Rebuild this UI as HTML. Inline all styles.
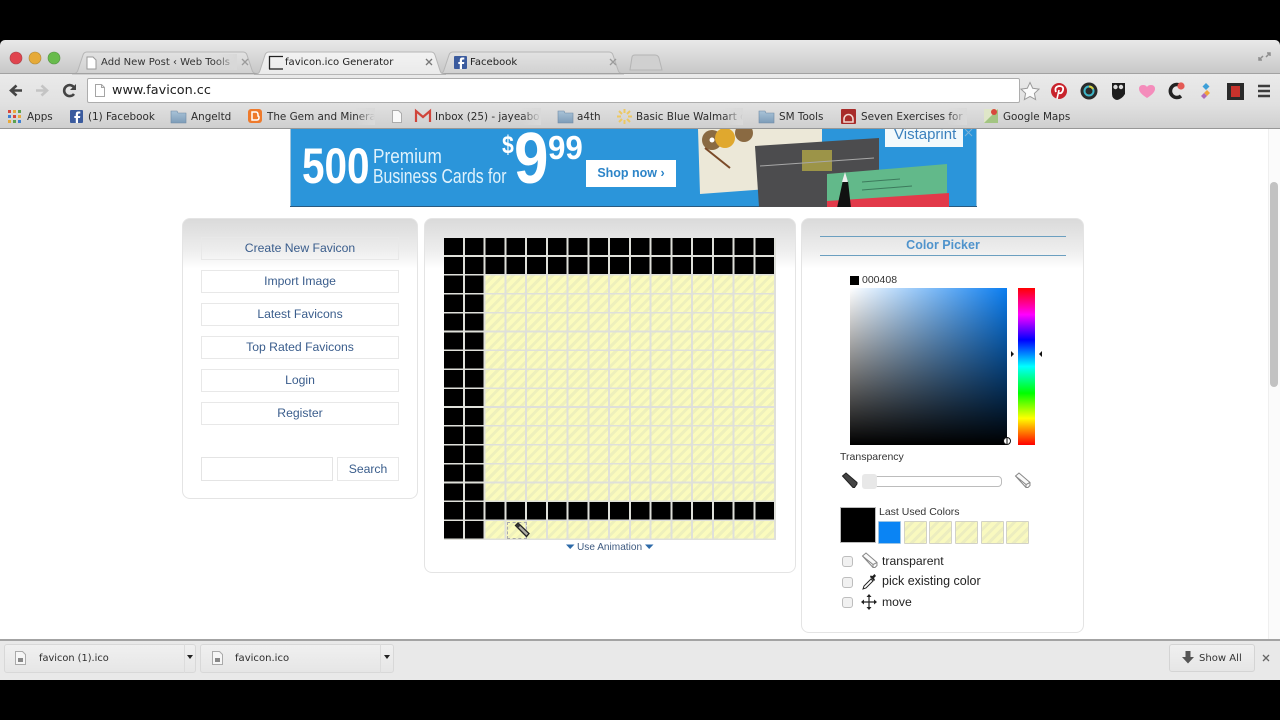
<!DOCTYPE html>
<html><head><meta charset="utf-8"><title>favicon.ico Generator</title>
<style>
html,body{margin:0;padding:0;background:#000;}
#page{position:relative;width:1280px;height:720px;overflow:hidden;background:#000;font-family:"Liberation Sans",sans-serif;filter:blur(.35px);}
.a,.t{position:absolute;}
.t{white-space:nowrap;}
.ch{font-family:"DejaVu Sans",sans-serif;font-size:10.4px;color:#2c2c2c;line-height:14px;}
.tb{font-size:10.05px;}
.panel{position:absolute;box-sizing:border-box;border:1px solid #e4e4e4;border-radius:8px;background:linear-gradient(#dadada 0,#eeeeee 32px,#fff 50px,#fff 100%);}
.btn{position:absolute;box-sizing:border-box;left:201px;width:198px;height:23px;border:1px solid #e8e8e8;text-align:center;font-size:12.2px;line-height:21px;color:#3a5d8c;}
.sw{position:absolute;top:521px;width:23px;height:23px;box-sizing:border-box;border:1px solid #d2d2c6;border-radius:1px;background:repeating-linear-gradient(135deg,#f9f9bf 0 4px,#ecedbf 4px 7px);}
.cb{position:absolute;left:842px;width:11px;height:11px;box-sizing:border-box;border:1px solid #bdbdbd;border-radius:3px;background:#f1f1f1;}
.lbl{font-size:12.2px;color:#222;line-height:16px;}
</style></head><body>
<div id="page">
<!-- chrome -->
<div class="a" style="left:0;top:40px;width:1280px;height:34px;background:linear-gradient(#e8e8e8,#c6c6c6);border-radius:5px 5px 0 0;"></div>
<div class="a" style="left:0;top:74px;width:1280px;height:32px;background:linear-gradient(#eaeaea,#e0e0e0);"></div>
<div class="a" style="left:0;top:105px;width:1280px;height:23px;background:linear-gradient(#e0e0e0,#cfcfcf);"></div>
<div class="a" style="left:0;top:128px;width:1280px;height:1px;background:#979797;"></div>
<svg class="a" style="left:0;top:40px" width="1280" height="40" viewBox="0 40 1280 40">
<defs>
<linearGradient id="tb" x1="0" y1="0" x2="0" y2="1"><stop offset="0" stop-color="#e2e2e2"/><stop offset="1" stop-color="#d0d0d0"/></linearGradient>
<linearGradient id="ta" x1="0" y1="0" x2="0" y2="1"><stop offset="0" stop-color="#f2f2f2"/><stop offset="1" stop-color="#eaeaea"/></linearGradient>
</defs>
<circle cx="16" cy="58" r="6" fill="#e0444e" stroke="#a8434a" stroke-width=".6"/>
<circle cx="35" cy="58" r="6" fill="#e6aa38" stroke="#b08a3a" stroke-width=".6"/>
<circle cx="54" cy="58" r="6" fill="#68bb4c" stroke="#559344" stroke-width=".6"/>
<path d="M630 70l2-13q.5-2 3-2h20q3 0 4 3l3 12z" fill="#d0d0d0" stroke="#b4b4b4"/>
<path d="M72 74q5 0 6-4l5-15q1-3 4-3h156q3 0 4 3l5 15q1 4 6 4z" fill="url(#tb)" stroke="#b6b6b6"/>
<path d="M438 74q5 0 6-4l5-15q1-3 4-3h156q3 0 4 3l5 15q1 4 6 4z" fill="url(#tb)" stroke="#b6b6b6"/>
<path d="M0 73.500H1280" stroke="#a2a2a2"/>
<path d="M254 74.500q5 0 6-4l5-15.500q1-3 4-3h162q3 0 4 3l5 15.500q1 4 6 4z" fill="url(#ta)" stroke="#b6b6b6"/>
<path d="M87 57h6l3 3v9h-9z" fill="#fff" stroke="#9a9a9a"/>
<path d="M269.500 69V56.500H283" fill="none" stroke="#222" stroke-width="1.300"/><path d="M269 69H283" stroke="#222" stroke-width="1.300"/>
<rect x="454" y="56" width="13" height="13" rx="1" fill="#3b5b9e"/><path d="M462 69v-5h2l.3-2h-2.300v-1.500q0-1 1-1h1.300V57.500h-2q-2.500 0-2.500 2.500v2h-1.500v2h1.500v5z" fill="#fff"/>
<g stroke="#9b9b9b" stroke-width="1.300"><path d="M242 59l6 6M248 59l-6 6"/><path d="M610 59l6 6M616 59l-6 6"/></g>
<g stroke="#777" stroke-width="1.300"><path d="M426 59l6 6M432 59l-6 6"/></g>
<path d="M1259 57l4-4M1259 54v3h3M1270 50l-4 4M1270 53v-3h-3" transform="translate(0 3)" fill="none" stroke="#8e8e8e" stroke-width="1.500"/>
</svg>
<span class="t ch tb" style="left:101px;top:56px;color:#333;">Add New Post ‹ Web Tools</span>
<div class="a" style="left:215px;top:54px;width:22px;height:16px;background:linear-gradient(90deg,rgba(216,216,216,0),#d8d8d8);"></div>
<span class="t ch tb" style="left:285px;top:56px;color:#222;">favicon.ico Generator</span>
<span class="t ch tb" style="left:470px;top:56px;color:#222;">Facebook</span>
<!-- toolbar icons -->
<svg class="a" style="left:0;top:76px" width="90" height="30" viewBox="0 76 90 30">
<path d="M22 90.500H12M16.500 85.500l-5.500 5 5.500 5" fill="none" stroke="#444" stroke-width="2.600"/>
<path d="M36 90.500h10M41.500 85.500l5.500 5-5.500 5" fill="none" stroke="#c4c4c4" stroke-width="2.600"/>
<path d="M74 94a5.500 5.500 0 1 1 .5-6" fill="none" stroke="#444" stroke-width="2.600"/><path d="M76 84v6h-6z" fill="#444"/>
</svg>
<div class="a" style="left:87px;top:78px;width:933px;height:25px;box-sizing:border-box;background:#fff;border:1px solid #adadad;border-radius:2px;"></div>
<svg class="a" style="left:94px;top:83px" width="12" height="15"><path d="M1.500 1.500h6l3 3v9h-9z" fill="#fff" stroke="#a5a5a5"/><path d="M7.500 1.500v3h3" fill="none" stroke="#a5a5a5"/></svg>
<span class="t" style="left:112px;top:82px;font-family:'DejaVu Sans',sans-serif;font-size:12.8px;line-height:17px;color:#1c1c1c;">www.favicon.cc</span>
<svg class="a" style="left:1020px;top:80px" width="260" height="24" viewBox="1020 80 260 24">
<path d="M1030 82.500l2.700 5.800 6.300.8-4.600 4.300 1.200 6.200-5.600-3.100-5.600 3.100 1.200-6.200-4.600-4.300 6.300-.8z" fill="#fbfbfb" stroke="#9a9a9a"/>
<circle cx="1059" cy="91" r="8" fill="#c8232c"/><path d="M1057 99l2-9" stroke="#fff" stroke-width="1.600"/><path d="M1056 92q-2-5 3-6 5 0 4 4-1 4-4 3" fill="none" stroke="#fff" stroke-width="1.800"/>
<circle cx="1089" cy="91" r="8.500" fill="#2a2a2a"/><circle cx="1089" cy="91" r="4.500" fill="none" stroke="#3fb6c8" stroke-width="2"/><path d="M1089 86.500a4.500 4.500 0 0 1 4 2.500" stroke="#d7d040" stroke-width="2" fill="none"/>
<path d="M1112 83h13v11q-3 5-8 6-5-1-5-6z" fill="#1d1d1d"/><circle cx="1115.500" cy="87" r="2.200" fill="#ddd"/><circle cx="1121" cy="87" r="2.200" fill="#ddd"/>
<path d="M1147 98q-8-5-8-9 0-4 4-4 3 0 4 2 1-2 4-2 4 0 4 4 0 4-8 9z" fill="#f48cbb"/>
<path d="M1181 96a6.500 6.500 0 1 1 0-10" fill="none" stroke="#222" stroke-width="3.600"/><circle cx="1181" cy="86" r="3.600" fill="#e45a55"/>
<path d="M1206 83l3.500 3.500-3.500 3.500-3.500-3.500z" fill="#3d9fd8"/><path d="M1207 90l3 3-3 3-3-3z" fill="#f2a43a"/><path d="M1204 93l3 3-3 3-3-3z" fill="#b068b8"/>
<rect x="1227" y="83" width="17" height="17" fill="#2a2a2a"/><rect x="1231" y="86" width="9" height="11" fill="#c8322c"/>
<path d="M1258 86h12M1258 91h12M1258 96h12" stroke="#3d3d3d" stroke-width="2.400"/>
</svg>
<!-- bookmarks -->
<svg class="a" style="left:0;top:106px" width="1010" height="22" viewBox="0 106 1010 22">
<defs><linearGradient id="fd" x1="0" y1="0" x2="0" y2="1"><stop offset="0" stop-color="#a9c3d8"/><stop offset="1" stop-color="#7d9cb8"/></linearGradient></defs>
<g fill="#d8463c"><rect x="8" y="110" width="3" height="3"/></g><rect x="13" y="110" width="3" height="3" fill="#e8a93a"/><rect x="18" y="110" width="3" height="3" fill="#5ba14f"/>
<rect x="8" y="115" width="3" height="3" fill="#3d7fd4"/><rect x="13" y="115" width="3" height="3" fill="#d8463c"/><rect x="18" y="115" width="3" height="3" fill="#e8a93a"/>
<rect x="8" y="120" width="3" height="3" fill="#e8a93a"/><rect x="13" y="120" width="3" height="3" fill="#5ba14f"/><rect x="18" y="120" width="3" height="3" fill="#3d7fd4"/>
<rect x="70" y="110" width="13" height="13" rx="1" fill="#3b5b9e"/><path d="M78 123v-5h2l.3-2h-2.300v-1.500q0-1 1-1h1.300v-2h-2q-2.500 0-2.500 2.500v2h-1.500v2h1.500v5z" fill="#fff"/>
<path d="M171 111h6l1 2h8v10h-15z" fill="url(#fd)" stroke="#6f8aa5" stroke-width=".6"/>
<rect x="248" y="109" width="14" height="14" rx="3" fill="#ee7a2c"/><path d="M252 112h4q2 0 2 3v1q1 0 1 1.500 0 2.500-2 2.500h-5z" fill="none" stroke="#fff" stroke-width="1.500"/>
<path d="M392.500 110.500h6l3 3v9h-9z" fill="#fafafa" stroke="#acacac"/>
<path d="M416 122v-11l7 6 7-6v11" fill="none" stroke="#d0453b" stroke-width="2.200"/>
<path d="M558 111h6l1 2h8v10h-15z" fill="url(#fd)" stroke="#6f8aa5" stroke-width=".6"/>
<path d="M624.500 109v4M624.500 120v4M617 116.500h4M628 116.500h4M619 111l3 3M627 119l3 3M630 111l-3 3M622 119l-3 3" stroke="#edc862" stroke-width="2"/>
<path d="M759 111h6l1 2h8v10h-15z" fill="url(#fd)" stroke="#6f8aa5" stroke-width=".6"/>
<rect x="841" y="109" width="15" height="15" rx="1" fill="#a82c2a"/><path d="M844 119a4.500 4.500 0 0 1 9 0v3h-9z" fill="none" stroke="#f2d8d0" stroke-width="1.600"/>
<rect x="984" y="109" width="14" height="14" fill="#dfe6c8"/><path d="M984 123l14-14v14z" fill="#a3c582"/><circle cx="994" cy="112" r="3" fill="#d8483c"/>
</svg>
<span class="t ch" style="left:27px;top:110px;">Apps</span>
<span class="t ch" style="left:88px;top:110px;">(1) Facebook</span>
<span class="t ch" style="left:191px;top:110px;">Angeltd</span>
<span class="t ch" style="left:267px;top:110px;width:108px;overflow:hidden;">The Gem and Minera</span>
<span class="t ch" style="left:435px;top:110px;width:106px;overflow:hidden;">Inbox (25) - jayeabo</span>
<span class="t ch" style="left:577px;top:110px;">a4th</span>
<span class="t ch" style="left:636px;top:110px;width:107px;overflow:hidden;">Basic Blue Walmart c</span>
<span class="t ch" style="left:779px;top:110px;">SM Tools</span>
<span class="t ch" style="left:861px;top:110px;width:106px;overflow:hidden;">Seven Exercises for t</span>
<span class="t ch" style="left:1003px;top:110px;">Google Maps</span>
<div class="a" style="left:355px;top:108px;width:20px;height:17px;background:linear-gradient(90deg,rgba(218,218,218,0),#d9d9d9);"></div>
<div class="a" style="left:521px;top:108px;width:20px;height:17px;background:linear-gradient(90deg,rgba(218,218,218,0),#d9d9d9);"></div>
<div class="a" style="left:723px;top:108px;width:20px;height:17px;background:linear-gradient(90deg,rgba(218,218,218,0),#d9d9d9);"></div>
<div class="a" style="left:947px;top:108px;width:20px;height:17px;background:linear-gradient(90deg,rgba(218,218,218,0),#d9d9d9);"></div>
<!-- page -->
<div class="a" style="left:0;top:129px;width:1280px;height:511px;background:#fff;overflow:hidden;"></div>
<div class="a" style="left:1268px;top:129px;width:1px;height:511px;background:#efefef;"></div>
<div class="a" style="left:1269px;top:129px;width:11px;height:511px;background:#fbfbfb;"></div>
<div class="a" style="left:1270px;top:182px;width:8px;height:205px;background:#c2c2c2;border-radius:4px;"></div>
<!-- ad -->
<div class="a" style="left:290px;top:129px;width:687px;height:78px;background:#2b95da;overflow:hidden;box-shadow:inset 0 -1px 0 #2a5a80,inset 1px 0 0 #a0c4dc,inset -1px 0 0 #a0c4dc;">
<span class="t" style="left:12px;top:8px;font-size:50px;font-weight:bold;line-height:58px;color:#fff;transform:scaleX(.81);transform-origin:left;">500</span>
<span class="t" style="left:83px;top:17px;font-size:20px;line-height:22px;color:#dff2fc;transform:scaleX(.86);transform-origin:left;">Premium</span>
<span class="t" style="left:83px;top:37px;font-size:20px;line-height:22px;color:#dff2fc;transform:scaleX(.79);transform-origin:left;">Business Cards for</span>
<span class="t" style="left:212px;top:2px;font-size:25px;font-weight:bold;line-height:28px;color:#fff;transform:scaleX(.85);transform-origin:left;">$</span>
<span class="t" style="left:224px;top:-14px;font-size:72px;font-weight:bold;line-height:88px;color:#fff;transform:scaleX(.86);transform-origin:left;">9</span>
<span class="t" style="left:258px;top:-1px;font-size:33px;font-weight:bold;line-height:40px;color:#fff;transform:scaleX(.95);transform-origin:left;">99</span>
<div class="a" style="left:296px;top:31px;width:90px;height:27px;background:#fff;text-align:center;font-size:12.5px;font-weight:bold;line-height:26px;color:#2c84c8;">Shop now ›</div>
<svg class="a" style="left:400px;top:0" width="287" height="78" viewBox="690 129 287 78">
<path d="M698 129H822V185L700 194z" fill="#ece8d8"/>
<circle cx="712" cy="140" r="10" fill="#8a6a42"/><circle cx="725" cy="138" r="10" fill="#e0a82e"/><circle cx="744" cy="133" r="9" fill="#8a6a42"/>
<path d="M705 148l25 20" stroke="#7a4a28" stroke-width="2"/>
<circle cx="712" cy="140" r="2.500" fill="#fff"/>
<path d="M755 146L879 138V207H759z" fill="#4c4c4e"/>
<rect x="802" y="150" width="30" height="21" fill="#9c9448"/>
<path d="M760 166L874 158" stroke="#a8a8a8"/>
<path d="M827 174L947 164V207H827z" fill="#62b98a"/>
<path d="M827 201L949 193V207H827z" fill="#e23a4a"/>
<path d="M843 180l5 1 3 27h-14z" fill="#111"/><path d="M845 172l3 10h-6z" fill="#eee"/>
<path d="M862 182l38-3M862 190l50-4" stroke="#3c7a5c"/>
<rect x="885" y="125" width="78" height="22" fill="#f2f9fc"/>
</svg>
<span class="t" style="left:604px;top:-3px;font-size:15px;line-height:18px;color:#3b80bd;">Vistaprint</span>
<svg class="a" style="left:674px;top:0" width="11" height="8"><path d="M1 0l7 7M8 0L1 7" stroke="#7fb4d8"/></svg>
</div>
<!-- left panel -->
<div class="panel" style="left:182px;top:218px;width:236px;height:281px;"></div>
<div class="btn" style="top:237px;">Create New Favicon</div>
<div class="btn" style="top:270px;">Import Image</div>
<div class="btn" style="top:303px;">Latest Favicons</div>
<div class="btn" style="top:336px;">Top Rated Favicons</div>
<div class="btn" style="top:369px;">Login</div>
<div class="btn" style="top:402px;">Register</div>
<div class="a" style="left:201px;top:457px;width:132px;height:24px;box-sizing:border-box;border:1px solid #e4e4e4;"></div>
<div class="btn" style="left:337px;top:457px;width:62px;height:24px;line-height:22px;">Search</div>
<!-- mid panel -->
<div class="panel" style="left:424px;top:218px;width:372px;height:355px;"></div>
<div class="a" style="left:444px;top:238px;width:332px;height:302px;background:repeating-linear-gradient(135deg,#fbfbbd 0 4px,#eef0bc 4px 7px);"></div>
<div class="a" style="left:444px;top:238px;width:332px;height:37px;background:#000;"></div>
<div class="a" style="left:444px;top:502.300px;width:332px;height:18px;background:#000;"></div>
<div class="a" style="left:444px;top:238px;width:40.500px;height:301px;background:#000;"></div>
<div class="a" style="left:444px;top:238px;width:332px;height:302px;background-image:repeating-linear-gradient(90deg,transparent 0 18.750px,#dfe0da 18.750px 20.750px),repeating-linear-gradient(180deg,transparent 0 17.200px,#dfe0da 17.200px 18.875px);"></div>
<div class="a" style="left:507px;top:522px;width:20px;height:17px;box-sizing:border-box;border:1px dashed #aaa;"></div>
<svg class="a" style="left:513px;top:522px" width="18" height="17"><path d="M2.500 3.500L5 1l11 10.500-2.500 3z" fill="#b0aea4" stroke="#222" stroke-width="1.300"/><path d="M2.500 3.500L5 1l2.500 2.500L5 6z" fill="#333"/></svg>
<svg class="a" style="left:566px;top:544px" width="9" height="6"><path d="M0 .5h8.500L4.200 5z" fill="#2d6aa8"/></svg>
<svg class="a" style="left:645px;top:544px" width="9" height="6"><path d="M0 .5h8.500L4.200 5z" fill="#2d6aa8"/></svg>
<span class="t" style="left:577px;top:541px;font-size:10.1px;line-height:13px;color:#3e5a80;">Use Animation</span>
<!-- right panel -->
<div class="panel" style="left:801px;top:218px;width:283px;height:415px;"></div>
<div class="a" style="left:820px;top:236px;width:246px;height:18px;border-top:1px solid #6b9fc0;border-bottom:1px solid #6b9fc0;text-align:center;font-size:12.5px;font-weight:bold;line-height:17px;color:#4f93cc;">Color Picker</div>
<div class="a" style="left:850px;top:276px;width:9px;height:9px;background:#000;"></div>
<span class="t" style="left:862px;top:274px;font-size:10.5px;line-height:13px;color:#333;">000408</span>
<div class="a" style="left:850px;top:288px;width:157px;height:157px;background:linear-gradient(rgba(0,0,0,0),#000),linear-gradient(90deg,#fff,rgba(255,255,255,0)),#0a7df0;"></div>
<div class="a" style="left:1018px;top:288px;width:17px;height:157px;background:linear-gradient(#ff0000,#ff00ff 17%,#0000ff 33%,#00ffff 50%,#00ff00 67%,#ffff00 83%,#ff0000);"></div>
<svg class="a" style="left:1010px;top:350px" width="34" height="8"><path d="M1 1l3 3-3 3zM32 1l-3 3 3 3z" fill="#111"/></svg>
<svg class="a" style="left:1002px;top:436px" width="10" height="10"><circle cx="5" cy="5" r="3.500" fill="#fff" stroke="#111"/><path d="M5 1.500v7" stroke="#111"/></svg>
<span class="t" style="left:840px;top:451px;font-size:10.5px;line-height:13px;color:#333;">Transparency</span>
<svg class="a" style="left:841px;top:472px" width="18" height="17"><path d="M1.500 4L5 1l11 9.500v1.500l-2.500 3.500H12z" fill="#444" stroke="#222"/></svg>
<div class="a" style="left:862px;top:476px;width:140px;height:11px;box-sizing:border-box;border:1px solid #bcbcbc;border-radius:4px;background:#fff;"></div>
<div class="a" style="left:862px;top:474px;width:15px;height:15px;background:#e8e8e8;border-radius:3px;"></div>
<svg class="a" style="left:1014px;top:472px" width="18" height="17"><path d="M1.500 4L5 1l11 9.500v3l-2 2h-2zM12 15.500v-3l4-2M12 12.500L1.500 4" fill="#fafafa" stroke="#888"/></svg>
<div class="a" style="left:840px;top:507px;width:36px;height:36px;box-sizing:border-box;border:1px solid #bbb;background:#000;"></div>
<span class="t" style="left:879px;top:506px;font-size:10.5px;line-height:13px;color:#333;">Last Used Colors</span>
<div class="sw" style="left:878px;background:#0a84f4;border-color:#9cc4e4;"></div>
<div class="sw" style="left:904px;"></div>
<div class="sw" style="left:929px;"></div>
<div class="sw" style="left:955px;"></div>
<div class="sw" style="left:981px;"></div>
<div class="sw" style="left:1006px;"></div>
<div class="cb" style="top:556px;"></div>
<div class="cb" style="top:577px;"></div>
<div class="cb" style="top:597px;"></div>
<svg class="a" style="left:861px;top:552px" width="17" height="17"><path d="M1.500 4L5 1l11 9.500v3l-2 2h-2zM12 15.500v-3l4-2M12 12.500L1.500 4" fill="#fafafa" stroke="#888"/></svg>
<svg class="a" style="left:861px;top:573px" width="17" height="18"><path d="M2 16l1-3 7-7 2 2-7 7z" fill="#fff" stroke="#222"/><path d="M9 4l4 4 1-1-1-2 2-2-1.500-2-2 2-2-.5z" fill="#222"/></svg>
<svg class="a" style="left:861px;top:594px" width="16" height="16"><path d="M8 1v14M1 8h14" stroke="#222" stroke-width="1.200"/><path d="M8 0l2.500 3h-5zM8 16l2.500-3h-5zM0 8l3-2.500v5zM16 8l-3-2.500v5z" fill="#222"/></svg>
<span class="t lbl" style="left:882px;top:553px;">transparent</span>
<span class="t lbl" style="left:882px;top:573px;font-size:12.5px;">pick existing color</span>
<span class="t lbl" style="left:882px;top:594px;">move</span>
<!-- downloads -->
<div class="a" style="left:0;top:639px;width:1280px;height:41px;box-sizing:border-box;border-top:2px solid #a3a3a3;background:#e9e9e9;"></div>
<div class="a" style="left:4px;top:644px;width:192px;height:29px;box-sizing:border-box;border:1px solid #d8d8d8;border-radius:3px;background:linear-gradient(#f0f0f0,#e6e6e6);"></div>
<div class="a" style="left:184px;top:644px;width:1px;height:29px;background:#dcdcdc;"></div>
<div class="a" style="left:200px;top:644px;width:194px;height:29px;box-sizing:border-box;border:1px solid #d8d8d8;border-radius:3px;background:linear-gradient(#f0f0f0,#e6e6e6);"></div>
<div class="a" style="left:380px;top:644px;width:1px;height:29px;background:#dcdcdc;"></div>
<svg class="a" style="left:14px;top:650px" width="14" height="16"><path d="M1.500 1.500h7l3 3v10h-10z" fill="#f6f6f6" stroke="#aaa"/><rect x="4" y="8" width="5" height="4" fill="#888"/></svg>
<svg class="a" style="left:211px;top:650px" width="14" height="16"><path d="M1.500 1.500h7l3 3v10h-10z" fill="#f6f6f6" stroke="#aaa"/><rect x="4" y="8" width="5" height="4" fill="#888"/></svg>
<span class="t ch" style="left:39px;top:652px;font-size:9.8px;">favicon (1).ico</span>
<span class="t ch tb" style="left:235px;top:652px;">favicon.ico</span>
<svg class="a" style="left:187px;top:655px" width="7" height="5"><path d="M0 0h6L3 4z" fill="#222"/></svg>
<svg class="a" style="left:384px;top:655px" width="7" height="5"><path d="M0 0h6L3 4z" fill="#222"/></svg>
<div class="a" style="left:1169px;top:644px;width:86px;height:28px;box-sizing:border-box;border:1px solid #d4d4d4;border-radius:3px;background:linear-gradient(#f0f0f0,#e6e6e6);"></div>
<svg class="a" style="left:1182px;top:651px" width="12" height="13"><path d="M3.500 0h5v6H12L6 12.500 0 6h3.500z" fill="#555"/></svg>
<span class="t ch tb" style="left:1199px;top:652px;color:#333;">Show All</span>
<svg class="a" style="left:1262px;top:654px" width="9" height="9"><path d="M1 1l6 6M7 1L1 7" stroke="#666" stroke-width="1.300"/></svg>
</div>
</body></html>
